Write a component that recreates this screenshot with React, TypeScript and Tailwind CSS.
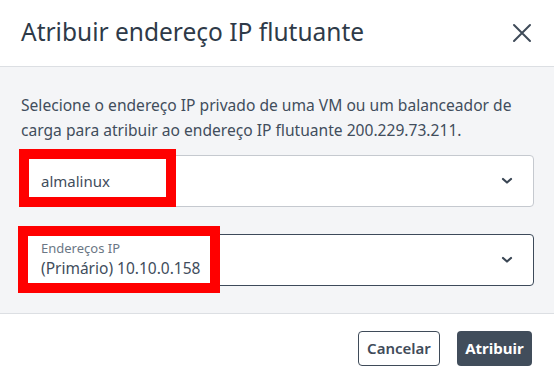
import React from 'react';

const ChevronDown: React.FC = () => (
    <svg width="12" height="8" viewBox="0 0 12 8" fill="none" aria-hidden="true">
        <path d="M2 2l4 3.5L10 2" stroke="#3a4654" strokeWidth="2.2" strokeLinecap="round" strokeLinejoin="round" />
    </svg>
);

const App: React.FC = () => {
    return (
        <div className="w-[554px] h-[379px] bg-white text-[#414d5c]" style={{ fontFamily: '"Noto Sans", "Open Sans", sans-serif' }}>
            <div className="h-[67px] flex items-center justify-between pl-[21px] pr-[20px] border-b border-[#dcdfe3]">
                <h2 className="text-[24.5px] text-[#2e3a48] leading-none -mt-[1px]">Atribuir endereço IP flutuante</h2>
                <button type="button" className="w-[24px] h-[24px] flex items-center justify-center text-[#3f4b59]">
                    <svg width="20" height="20" viewBox="0 0 20 20" fill="none" aria-hidden="true">
                        <path d="M2 2l16 16M18 2L2 18" stroke="currentColor" strokeWidth="2" strokeLinecap="round" />
                    </svg>
                </button>
            </div>

            <div className="bg-[#f4f5f7] px-[20px] pt-[26px] pb-[27px] border-b border-[#dcdfe3]">
                <p className="text-[15.6px] leading-[25px] pl-[1px] whitespace-nowrap">
                    Selecione o endereço IP privado de uma VM ou um balanceador de<br />
                    carga para atribuir ao endereço IP flutuante 200.229.73.211.
                </p>

                <div className="relative mt-[12px] h-[52px] bg-white border border-[#c5c9cf] rounded-[4px] flex items-center justify-between pl-[20px] pr-[20px]">
                    <span className="text-[15px] text-[#414d5c]">almalinux</span>
                    <ChevronDown />
                    <div className="absolute left-[-2px] top-[-7px] w-[157px] h-[58px] border-[10px] border-[#ff0000]" />
                </div>

                <div className="relative mt-[27px] h-[52px] bg-white border border-[#3d4a5a] rounded-[4px] flex items-center justify-between pl-[20px] pr-[20px]">
                    <div className="flex flex-col -mt-[2px]">
                        <span className="text-[13px] leading-[17px] text-[#6b7785]">Endereços IP</span>
                        <span className="text-[15.5px] leading-[22px] text-[#414d5c]">(Primário) 10.10.0.158</span>
                    </div>
                    <ChevronDown />
                    <div className="absolute left-[-3px] top-[-9px] w-[202px] h-[67px] border-[10px] border-[#ff0000]" />
                </div>
            </div>

            <div className="flex justify-end gap-[17px] pt-[17px] pr-[22px]">
                <button type="button" className="h-[35px] w-[82px] rounded-[4px] border border-[#3f4b59] bg-white text-[15px] font-semibold text-[#3f4b59]">Cancelar</button>
                <button type="button" className="h-[35px] w-[75px] rounded-[4px] bg-[#414d5b] text-[15px] font-bold text-white">Atribuir</button>
            </div>
        </div>
    );
};

export default App;
